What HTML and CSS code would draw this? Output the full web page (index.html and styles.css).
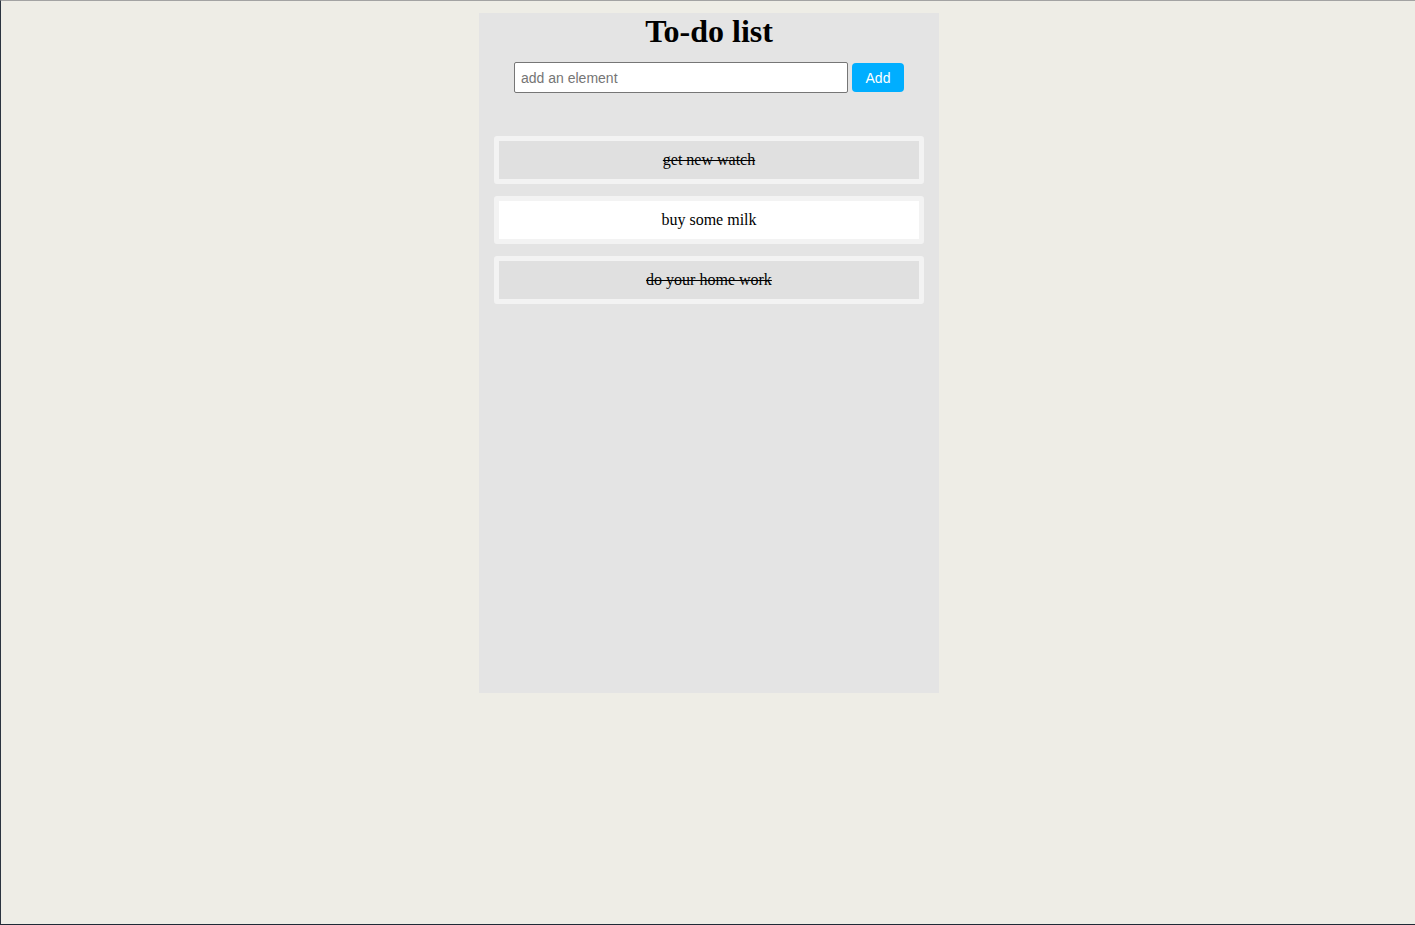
FILE: index.html
```html
<!DOCTYPE html>
<html>
<head>
<meta charset="utf-8">
<title>To-do list</title>
<link rel="stylesheet" href="styles.css">
</head>
<body>
<div class="frame">
  <div class="app">
    <h1 class="title">To-do list</h1>
    <form class="add-form">
      <input class="add-input" type="text" placeholder="add an element">
      <button class="add-btn" type="button">Add</button>
    </form>
    <ul class="list">
      <li class="item done">get new watch</li>
      <li class="item">buy some milk</li>
      <li class="item done">do your home work</li>
    </ul>
  </div>
</div>
</body>
</html>
```

FILE: styles.css
```css
html, body {
  margin: 0;
  padding: 0;
  height: 100%;
}
body {
  background: #eeede6;
  font-family: "Liberation Serif", "Times New Roman", serif;
}
.frame {
  box-sizing: border-box;
  height: 925px;
  border-top: 1px solid #a3a3a3;
  border-left: 1px solid #2b3440;
  border-bottom: 1px solid #1f2a36;
  display: flex;
  justify-content: center;
  padding-top: 12px;
  padding-left: 2px;
}
.app {
  width: 460px;
  height: 680px;
  background: #e4e4e4;
  box-sizing: border-box;
  padding: 0 15px;
  display: flex;
  flex-direction: column;
}
.title {
  margin: 0;
  text-align: center;
  font-size: 32px;
  font-weight: bold;
  line-height: 37px;
  color: #000;
}
.add-form {
  margin-top: 12px;
  display: flex;
  justify-content: center;
  align-items: center;
  gap: 4px;
}
.add-input {
  box-sizing: border-box;
  width: 334px;
  height: 31px;
  margin: 0;
  border: 1px solid #767676;
  border-radius: 2px;
  padding: 0 6px;
  font-family: "Liberation Sans", Arial, sans-serif;
  font-size: 14px;
  background: #fff;
}
.add-input::placeholder {
  color: #757575;
}
.add-btn {
  box-sizing: border-box;
  width: 52px;
  height: 29px;
  margin: 0;
  border: none;
  border-radius: 4px;
  background: #00aeff;
  color: #fff;
  font-family: "Liberation Sans", Arial, sans-serif;
  font-size: 14px;
}
.list {
  list-style: none;
  margin: 43px 0 0;
  padding: 0;
  display: flex;
  flex-direction: column;
  gap: 12px;
}
.item {
  box-sizing: border-box;
  height: 48px;
  border: 5px solid #f3f3f3;
  border-radius: 3px;
  background: #fff;
  display: flex;
  align-items: center;
  justify-content: center;
  font-size: 16px;
  color: #000;
}
.item.done {
  background: #e0e0e0;
  text-decoration: line-through;
}
```
